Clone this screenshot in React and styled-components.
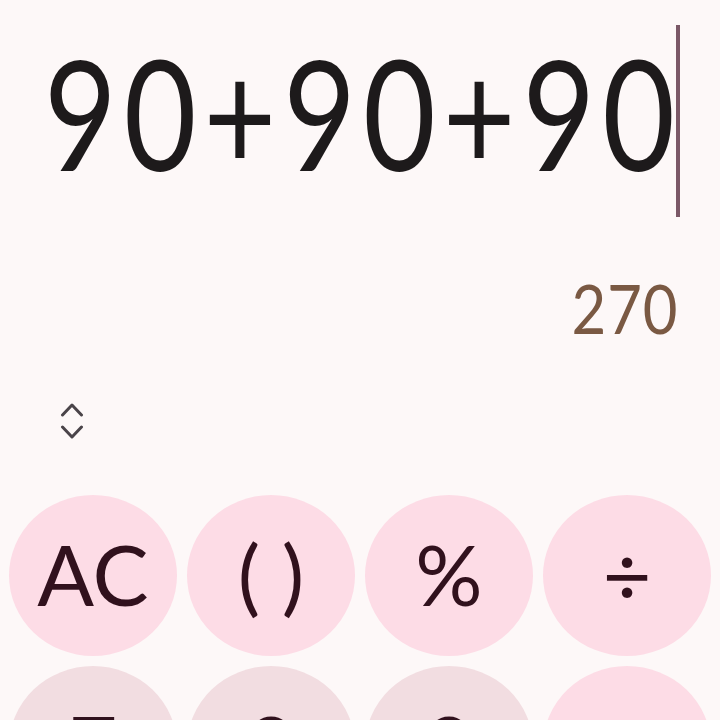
import React from "react";
import styled, { createGlobalStyle } from "styled-components";

const Global = createGlobalStyle`
  html, body { margin: 0; padding: 0; background: #fdf8f8; }
  body { font-family: "Lato", "Noto Sans", sans-serif; }
`;

const Screen = styled.div`
  width: 720px;
  height: 720px;
  overflow: hidden;
  display: flex;
  flex-direction: column;
  background: #fdf8f8;
`;

const ExpressionRow = styled.div`
  margin-top: 25px;
  height: 192px;
  display: flex;
  justify-content: flex-end;
  align-items: flex-start;
  padding-right: 40px;
`;

const ExpressionText = styled.span`
  margin-top: 11px;
  font-size: 153px;
  line-height: 1;
  font-weight: 400;
  letter-spacing: 8.5px;
  color: #1d1a1b;
  white-space: nowrap;
  transform: scaleX(0.82);
  transform-origin: right center;
  flex-shrink: 0;
`;

const Cursor = styled.div`
  width: 4px;
  height: 192px;
  margin-left: -6px;
  background: #7b5867;
  flex-shrink: 0;
`;

const ResultRow = styled.div`
  margin-top: 57px;
  height: 68px;
  display: flex;
  justify-content: flex-end;
  padding-right: 42px;
`;

const ResultText = styled.span`
  font-size: 68px;
  line-height: 1;
  font-weight: 400;
  letter-spacing: 1px;
  color: #7a5943;
  transform: scaleX(0.88);
  transform-origin: right center;
`;

const ToggleRow = styled.div`
  margin-top: 61px;
  padding-left: 60px;
  height: 36px;
  display: flex;
  align-items: center;
`;

const Keypad = styled.div`
  margin-top: 56px;
  padding-left: 9px;
  display: grid;
  grid-template-columns: repeat(4, 168px);
  grid-auto-rows: 161px;
  column-gap: 10px;
  row-gap: 10px;
`;

const Key = styled.button`
  border: none;
  padding: 0 0 4px;
  margin: 0;
  border-radius: 50%;
  background: ${(p) => (p.$tone === "num" ? "#f2dde1" : "#fddce6")};
  color: #31111d;
  font-family: "Lato", "Noto Sans", sans-serif;
  font-size: 84px;
  line-height: 1;
  font-weight: 400;
  display: flex;
  align-items: center;
  justify-content: center;
  cursor: pointer;
`;

const keys = [
  { label: "AC", tone: "fn" },
  { label: "( )", tone: "fn" },
  { label: "%", tone: "fn" },
  { label: "÷", tone: "fn" },
  { label: "7", tone: "num" },
  { label: "8", tone: "num" },
  { label: "9", tone: "num" },
  { label: "×", tone: "fn" },
];

function Chevrons() {
  return (
    <svg width="24" height="36" viewBox="0 0 24 36" fill="none">
      <path d="M2.5 12 L12 2 L21.5 12" stroke="#4a4449" strokeWidth="3" strokeLinecap="round" strokeLinejoin="round" />
      <path d="M2.5 24 L12 34 L21.5 24" stroke="#4a4449" strokeWidth="3" strokeLinecap="round" strokeLinejoin="round" />
    </svg>
  );
}

export default function App() {
  return (
    <>
      <Global />
      <Screen>
        <ExpressionRow>
          <ExpressionText>90+90+90</ExpressionText>
          <Cursor />
        </ExpressionRow>
        <ResultRow>
          <ResultText>270</ResultText>
        </ResultRow>
        <ToggleRow>
          <Chevrons />
        </ToggleRow>
        <Keypad>
          {keys.map((k) => (
            <Key key={k.label} $tone={k.tone}>
              {k.label}
            </Key>
          ))}
        </Keypad>
      </Screen>
    </>
  );
}
